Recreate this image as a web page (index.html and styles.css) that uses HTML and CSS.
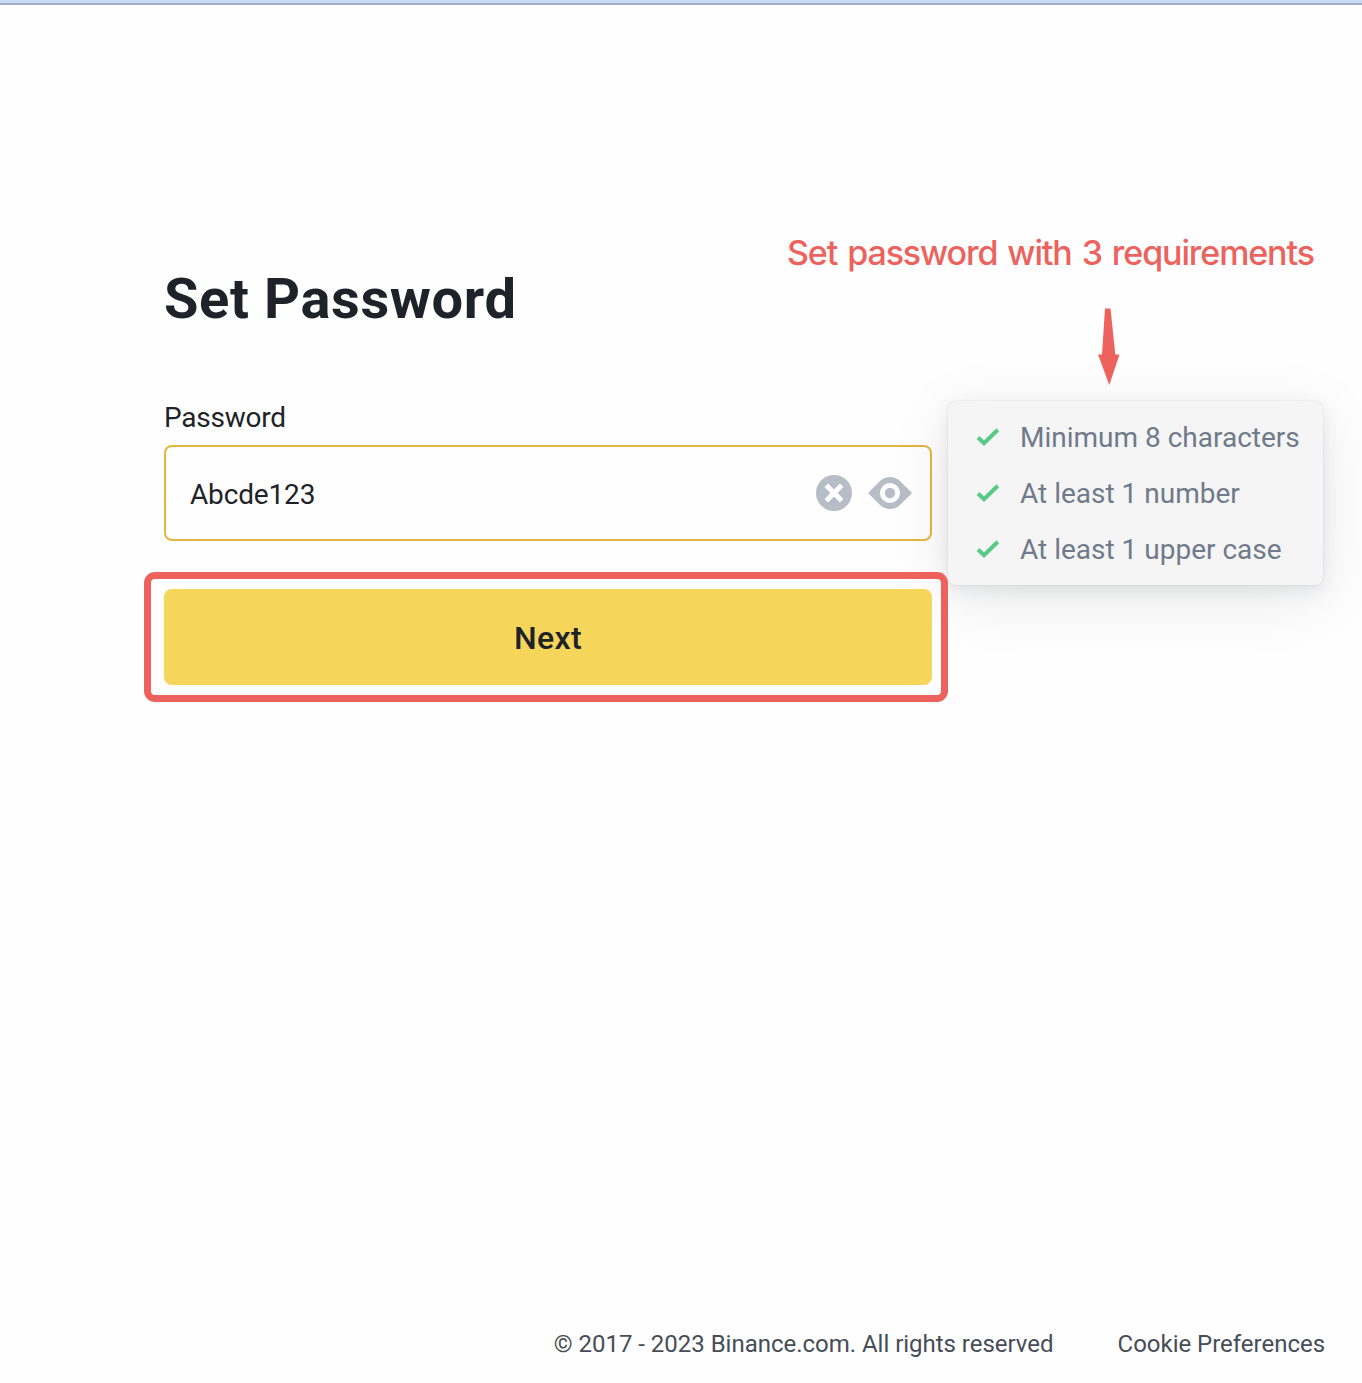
FILE: index.html
```
<!DOCTYPE html>
<html lang="en">
<head>
  <meta charset="UTF-8">
  <title>Set Password</title>
  <link rel="stylesheet" href="styles.css">
</head>
<body>
  <div class="top-bar"></div>

  <main class="content">
    <form class="form">
      <h1>Set Password</h1>
      <label class="label" for="password">Password</label>
      <div class="field">
        <input id="password" class="input" type="text" value="Abcde123">
        <svg class="icon-clear" viewBox="0 0 36 36" width="36" height="36">
          <circle cx="18" cy="18" r="18" fill="#b7bdc6"/>
          <path d="M10.300 10.300l15.400 15.400M25.700 10.300L10.300 25.700" stroke="#fff" stroke-width="5"/>
        </svg>
        <svg class="icon-eye" viewBox="0 0 44 32" width="44" height="32">
          <path d="M0 16L12 4Q16.500 0 22 0Q27.500 0 32 4L44 16L32 28Q27.500 32 22 32Q16.500 32 12 28Z" fill="#b7bdc6"/>
          <circle cx="22" cy="16" r="7.600" fill="none" stroke="#fff" stroke-width="4.900"/>
        </svg>

        <ul class="rules">
          <li>
            <svg viewBox="0 0 24 18" width="24" height="18"><path d="M2 9.500l6 5.700L21.800 1.700" fill="none" stroke="#5ac886" stroke-width="4"/></svg>
            <span>Minimum 8 characters</span>
          </li>
          <li>
            <svg viewBox="0 0 24 18" width="24" height="18"><path d="M2 9.500l6 5.700L21.800 1.700" fill="none" stroke="#5ac886" stroke-width="4"/></svg>
            <span>At least 1 number</span>
          </li>
          <li>
            <svg viewBox="0 0 24 18" width="24" height="18"><path d="M2 9.500l6 5.700L21.800 1.700" fill="none" stroke="#5ac886" stroke-width="4"/></svg>
            <span>At least 1 upper case</span>
          </li>
        </ul>

        <div class="note">
          <span>Set password with 3 requirements</span>
          <svg viewBox="0 0 22 77" width="22" height="77"><path d="M7 0.500H12.500L17.300 46.500H21.500L11.300 77L0 46.500H4Z" fill="#ed625c"/></svg>
        </div>
      </div>
      <button class="next" type="button">Next</button>
    </form>
  </main>

  <footer class="footer">
    <span>© 2017 - 2023 Binance.com. All rights reserved</span>
    <a>Cookie Preferences</a>
  </footer>
</body>
</html>
```

FILE: styles.css
```
* {
  box-sizing: border-box;
}
body {
  margin: 0;
  height: 1383px;
  display: flex;
  flex-direction: column;
  overflow: hidden;
  background: #fefefe;
  color: #1e2329;
  font-family: Roboto, sans-serif;
}
.top-bar {
  height: 5px;
  background: #cbdaf3;
  border-bottom: 2px solid #a0aeca;
}
.content {
  flex: 1;
  padding: 258px 0 0 164px;
}
.form {
  width: 768px;
}
h1 {
  margin: 0;
  font-size: 56px;
  line-height: 72px;
  font-weight: 700;
  letter-spacing: 0.62px;
  white-space: nowrap;
}
.label {
  display: block;
  margin-top: 63px;
  font-size: 28px;
  line-height: 40px;
  letter-spacing: -0.25px;
}
.field {
  position: relative;
  display: flex;
  align-items: center;
  height: 96px;
  margin-top: 7px;
  padding: 0 18px 0 24px;
  border: 2px solid #e5b540;
  border-radius: 8px;
  background: #fefefe;
}
.input {
  flex: 1;
  min-width: 0;
  padding: 2px 0 0;
  border: 0;
  outline: 0;
  background: none;
  color: #1e2329;
  font-family: Roboto, sans-serif;
  font-size: 28px;
  letter-spacing: -0.15px;
}
.icon-clear {
  margin-right: 16px;
}
.rules {
  position: absolute;
  left: 782px;
  top: -46px;
  width: 375px;
  height: 184px;
  margin: 0;
  padding: 8px 0 0 28px;
  list-style: none;
  border-radius: 8px;
  background: #f5f5f5;
  box-shadow: 0 0 2px rgba(24, 26, 32, 0.12), 0 6px 16px rgba(71, 77, 87, 0.1), 0 14px 64px rgba(24, 26, 32, 0.09);
}
.rules li {
  display: flex;
  align-items: center;
  gap: 20px;
  height: 56px;
  color: #707a8a;
  font-size: 28px;
  white-space: nowrap;
}
.note {
  position: absolute;
  left: 621px;
  top: -216px;
  display: flex;
  flex-direction: column;
  color: #ed625c;
  font-family: Inter, sans-serif;
  font-size: 34px;
  font-weight: 450;
  line-height: 44px;
  letter-spacing: -1.1px;
  word-spacing: 2px;
  white-space: nowrap;
}
.note svg {
  margin: 33px 0 0 311px;
}
.next {
  position: relative;
  display: block;
  width: 768px;
  height: 96px;
  margin-top: 48px;
  padding: 2px 0 0;
  border: 0;
  border-radius: 8px;
  background: #f5d55a;
  color: #1e2329;
  font-family: Roboto, sans-serif;
  font-size: 32px;
  font-weight: 500;
  letter-spacing: 0.3px;
}
/* highlight frame around the button */
.next::after {
  content: "";
  position: absolute;
  inset: -17px -16px -17px -20px;
  border: 7px solid #ed625c;
  border-radius: 11px;
}
.footer {
  display: flex;
  justify-content: flex-end;
  gap: 64px;
  padding: 0 37px 23px 0;
  color: #474d57;
  font-size: 24px;
  line-height: 32px;
  letter-spacing: -0.02px;
  white-space: nowrap;
}
```
